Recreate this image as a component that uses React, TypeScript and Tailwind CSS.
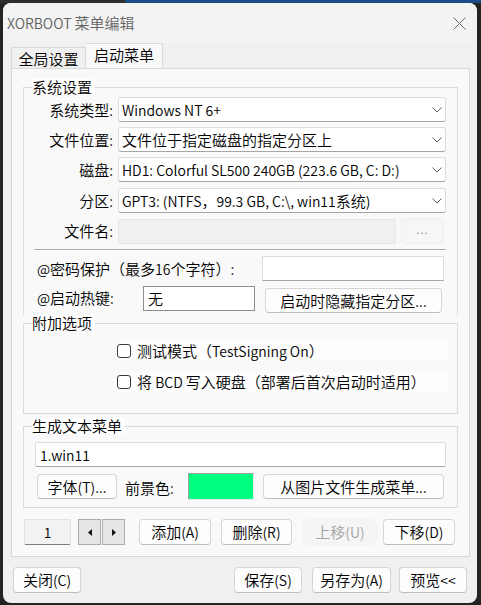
import type { ReactNode } from 'react';
import clsx from 'clsx';

// Latin runs are drawn a bit smaller than the CJK ones, as YaHei does
function Tx({ children }: { children: string }) {
  const parts = children.split(/([\x00-\x7F]+)/).filter(Boolean);
  return (
    <>
      {parts.map((p, i) =>
        /^[\x00-\x7F]+$/.test(p) ? (
          <span key={i} className="whitespace-pre text-[14px]">
            {p}
          </span>
        ) : (
          <span key={i}>{p}</span>
        )
      )}
    </>
  );
}

// --- small drawings ---
const Chevron = () => (
  <svg width="10" height="6" viewBox="0 0 10 6" className="shrink-0">
    <path d="M0.5 0.5L5 5L9.5 0.5" fill="none" stroke="#5f5f5f" strokeWidth="1" />
  </svg>
);

const CloseX = () => (
  <svg width="13" height="13" viewBox="0 0 13 13">
    <path d="M0.5 0.5L12.5 12.5M12.5 0.5L0.5 12.5" stroke="#6b6b6b" strokeWidth="1" />
  </svg>
);

const Tri = ({ dir }: { dir: 'l' | 'r' }) => (
  <svg width="4" height="7" viewBox="0 0 4 7">
    <path d={dir === 'l' ? 'M4 0L0 3.5L4 7Z' : 'M0 0L4 3.5L0 7Z'} fill="#111" />
  </svg>
);

function Select({ value }: { value: string }) {
  return (
    <div className="flex h-[25px] min-w-0 flex-1 items-center justify-between rounded-[3px] border border-[#dcdcdc] border-b-[#a6a6a6] bg-white pl-[3px] pr-[3px]">
      <span className="whitespace-nowrap leading-[18px]">
        <Tx>{value}</Tx>
      </span>
      <Chevron />
    </div>
  );
}

function Btn({ children, className, disabled }: { children: string; className?: string; disabled?: boolean }) {
  return (
    <div
      className={clsx(
        'flex shrink-0 items-center justify-center rounded-[4px] border leading-[18px]',
        disabled
          ? 'border-[#f3f3f3] bg-[#f5f5f5] text-[#a3a3a3]'
          : 'border-[#d5d5d5] border-b-[#bdbdbd] bg-[#fdfdfd] text-black',
        className
      )}
    >
      <span className="whitespace-nowrap">
        <Tx>{children}</Tx>
      </span>
    </div>
  );
}

function Row({ label, children, className }: { label: string; children: ReactNode; className?: string }) {
  return (
    <div className={clsx('flex items-center', className)}>
      <div className="w-[94px] shrink-0 pr-[5px] text-right leading-[18px]">
        <Tx>{label}</Tx>
      </div>
      {children}
    </div>
  );
}

function Check({ label }: { label: string }) {
  return (
    <div className="ml-[93px] mr-[10px] flex h-[20px] items-center bg-[#fdfdfd]">
      <span className="h-[14px] w-[14px] shrink-0 rounded-[3px] border border-[#3a3a3a] bg-white" />
      <span className="ml-[6px] whitespace-nowrap leading-[18px]">
        <Tx>{label}</Tx>
      </span>
    </div>
  );
}

export default function App() {
  return (
    <div className="flex h-[605px] w-[481px] flex-col overflow-hidden bg-[#232323] font-['Noto_Sans_CJK_SC',sans-serif] text-[15px] font-[350] text-black">
      {/* backdrop strip */}
      <div className="flex h-[3px] shrink-0">
        <div className="w-[125px] bg-[#2e2e2e]" />
        <div className="flex-1 bg-[#1d4b86]" />
      </div>

      <div className="ml-[3px] flex h-[600px] w-[474px] flex-col rounded-[8px] bg-[#f0f0f0]">
        {/* title bar */}
        <div className="flex h-[40px] shrink-0 items-center justify-between rounded-t-[8px] bg-[#f3f3f3] pl-[4px] pr-[11px]">
          <span className="text-[15px] leading-[18px] text-[#626262]">
            <Tx>XORBOOT 菜单编辑</Tx>
          </span>
          <CloseX />
        </div>

        {/* tabs */}
        <div className="ml-[8px] flex h-[25px] shrink-0 items-end">
          <div className="flex h-[21px] w-[75px] items-center justify-center border border-b-0 border-[#d9d9d9] bg-[#f0f0f0] pt-[2px]">
            全局设置
          </div>
          <div className="-mb-px flex h-[26px] w-[77px] items-center justify-center border border-b-0 border-l-0 border-[#d9d9d9] bg-[#f9f9f9] pb-[2px]">
            启动菜单
          </div>
        </div>

        {/* tab pane */}
        <div className="mx-[7px] ml-[8px] flex h-[489px] flex-col border border-[#d9d9d9] bg-[#f9f9f9] pl-[11px] pr-[11px] pt-[10px]">
          {/* 系统设置 */}
          <fieldset className="min-w-0 border border-b-0 border-[#dcdcdc] pb-[2px] pt-[2px]">
            <legend className="ml-[8px] bg-white pr-[3px] leading-[16px]">系统设置</legend>
            <div className="mr-[11px] flex flex-col">
              <Row label="系统类型:">
                <Select value="Windows NT 6+" />
              </Row>
              <Row label="文件位置:" className="mt-[5px]">
                <Select value="文件位于指定磁盘的指定分区上" />
              </Row>
              <Row label="磁盘:" className="mt-[5px]">
                <Select value="HD1: Colorful SL500 240GB (223.6 GB, C: D:)" />
              </Row>
              <Row label="分区:" className="mt-[6px]">
                <Select value="GPT3: (NTFS，99.3 GB, C:\, win11系统)" />
              </Row>
              <Row label="文件名:" className="mt-[5px]">
                <div className="h-[25px] flex-1 rounded-[2px] border border-[#e6e6e6] bg-[#f0f0f0]" />
                <div className="ml-[5px] mr-[2px] flex h-[26px] w-[43px] items-center justify-center rounded-[4px] border border-[#eeeeee] bg-[#f6f6f6] pb-[5px] text-[12px] tracking-[1px] text-[#8a8a8a]">
                  ...
                </div>
              </Row>
            </div>

            <div className="ml-[10px] mr-[11px] mt-[5px] h-[2px] border-t border-b border-t-[#a9a9a9] border-b-white" />

            <div className="mr-[13px] mt-[5px] flex h-[25px] items-center">
              <span className="ml-[13px] whitespace-nowrap leading-[18px]">
                <Tx>@密码保护（最多16个字符）:</Tx>
              </span>
              <div className="ml-auto h-[25px] w-[182px] border border-[#dcdcdc] border-b-[#a6a6a6] bg-white" />
            </div>

            <div className="mt-[5px] flex items-start">
              <span className="ml-[13px] mt-[3px] w-[106px] whitespace-nowrap leading-[18px]">
                <Tx>@启动热键:</Tx>
              </span>
              <div className="flex h-[25px] w-[112px] items-center border border-[#8e8e8e] bg-white pl-[4px] leading-[18px]">
                无
              </div>
              <Btn className="ml-[10px] mt-[2px] h-[25px] w-[177px]">启动时隐藏指定分区...</Btn>
            </div>
          </fieldset>

          {/* 附加选项 */}
          <fieldset className="min-w-0 border border-[#dcdcdc] pb-[21px] pt-[10px]">
            <legend className="ml-[8px] bg-white pr-[3px] leading-[16px]">附加选项</legend>
            <Check label="测试模式（TestSigning On）" />
            <div className="h-[11px]" />
            <Check label="将 BCD 写入硬盘（部署后首次启动时适用）" />
          </fieldset>

          {/* 生成文本菜单 */}
          <fieldset className="mt-[4px] min-w-0 border border-[#dcdcdc] pb-[7px] pt-[8px]">
            <legend className="ml-[8px] bg-white pr-[3px] leading-[16px]">生成文本菜单</legend>
            <div className="ml-[11px] mr-[11px] flex h-[25px] items-center rounded-[2px] border border-[#dcdcdc] border-b-[#a6a6a6] bg-white pl-[4px] text-[14px] leading-[18px]">
              1.win11
            </div>
            <div className="mt-[6px] flex items-center">
              <Btn className="ml-[13px] h-[25px] w-[80px]">字体(T)...</Btn>
              <span className="ml-[8px] w-[63px] pt-[2px] leading-[18px]">
                <Tx>前景色:</Tx>
              </span>
              <div className="h-[27px] w-[66px] border border-l-[#a0a0a0] border-t-[#a0a0a0] border-r-[#eaeaea] border-b-[#eaeaea] bg-[#00ff80]" />
              <Btn className="ml-[9px] h-[25px] w-[181px]">从图片文件生成菜单...</Btn>
            </div>
          </fieldset>

          {/* navigation row */}
          <div className="mt-[11px] flex items-center">
            <div className="ml-[1px] flex h-[26px] w-[47px] items-center justify-center rounded-[2px] border border-[#e2e2e2] border-b-[#7d7d7d] bg-[#f2f2f2] text-[14px] leading-[18px]">
              1
            </div>
            <div className="ml-[7px] flex gap-[1px]">
              <div className="flex h-[26px] w-[23px] items-center justify-center border border-[#adadad] bg-[#e5e5e5]">
                <Tri dir="l" />
              </div>
              <div className="flex h-[26px] w-[23px] items-center justify-center border border-[#adadad] bg-[#e5e5e5]">
                <Tri dir="r" />
              </div>
            </div>
            <Btn className="ml-[14px] h-[26px] w-[72px]">添加(A)</Btn>
            <Btn className="ml-[10px] h-[26px] w-[71px]">删除(R)</Btn>
            <Btn disabled className="ml-[11px] h-[26px] w-[74px]">上移(U)</Btn>
            <Btn className="ml-[6px] h-[26px] w-[72px]">下移(D)</Btn>
          </div>
        </div>

        {/* dialog buttons */}
        <div className="mx-[10px] mt-[10px] flex items-center">
          <Btn className="h-[26px] w-[68px]">关闭(C)</Btn>
          <Btn className="ml-auto h-[26px] w-[68px]">保存(S)</Btn>
          <Btn className="ml-[10px] h-[26px] w-[79px]">另存为(A)</Btn>
          <Btn className="ml-[8px] h-[26px] w-[68px]">预览&lt;&lt;</Btn>
        </div>
      </div>
    </div>
  );
}
